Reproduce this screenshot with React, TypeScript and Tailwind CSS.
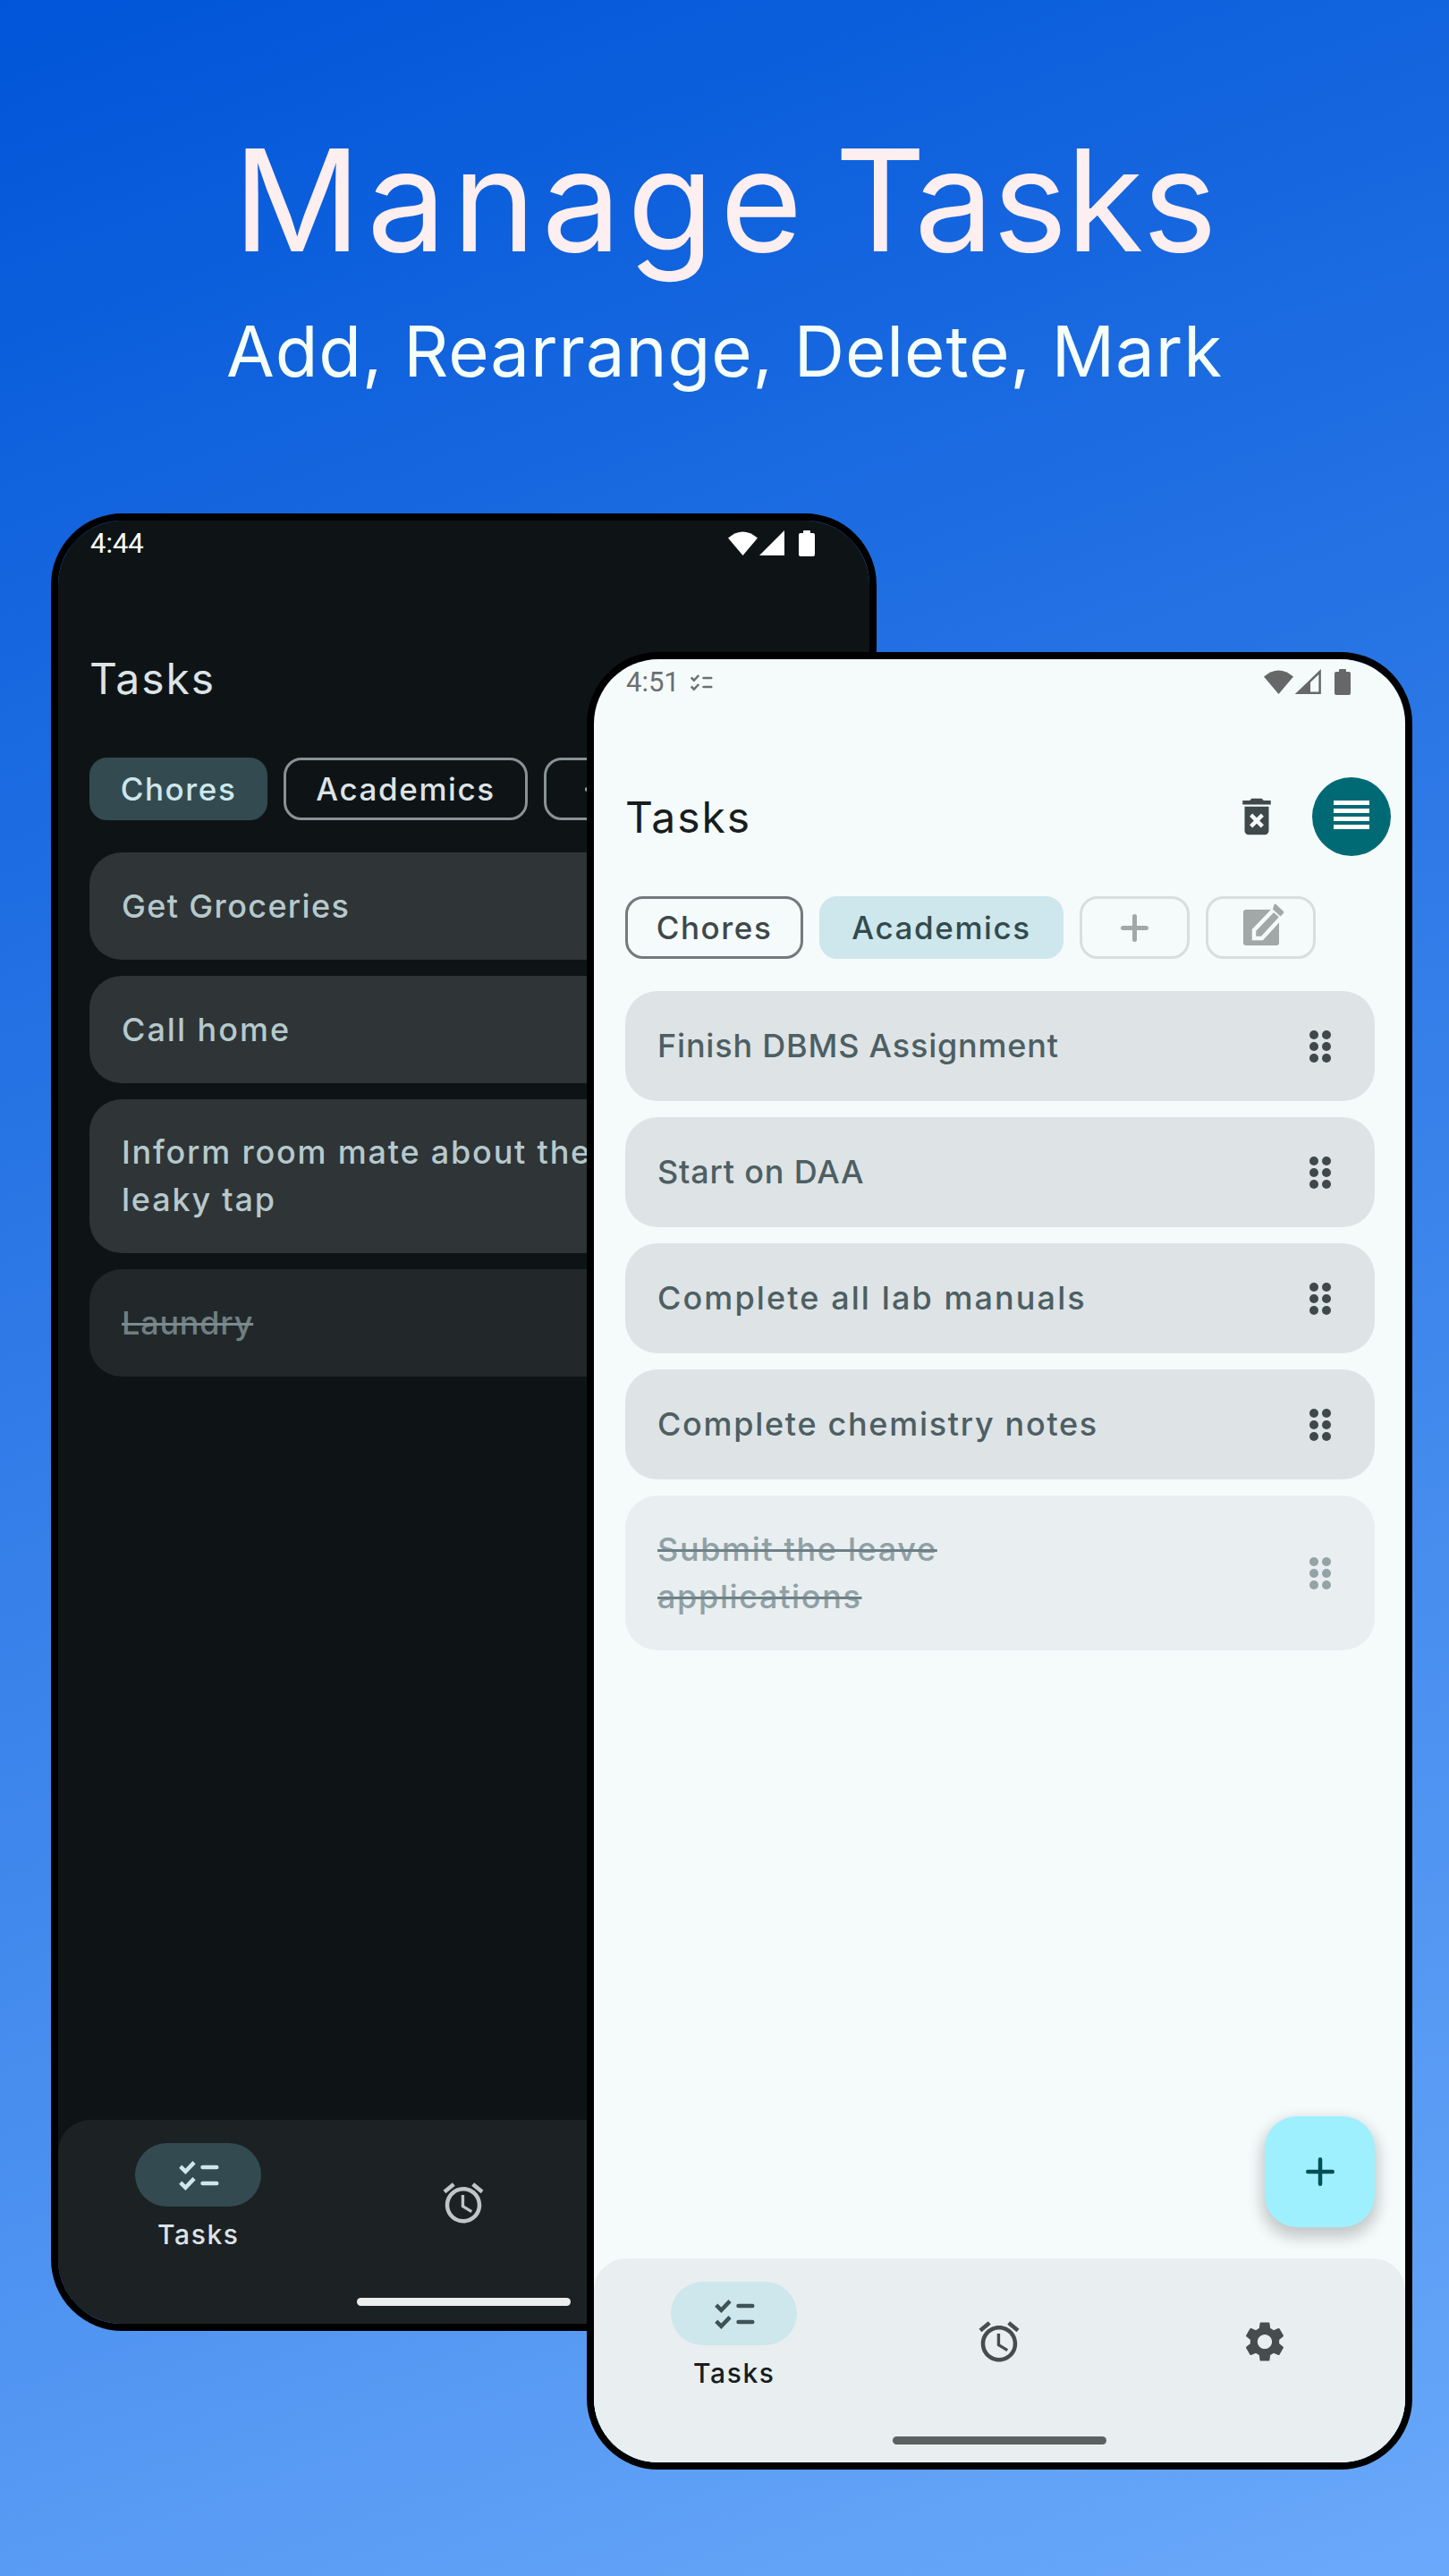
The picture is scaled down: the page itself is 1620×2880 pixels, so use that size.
import React from "react";

const FONT = "font-['Inter','Noto_Sans',sans-serif]";
const ROBOTO = "font-['Roboto','Liberation_Sans',sans-serif]";

type Theme = {
  screen: string; title: string; status: string; statusHex: string;
  chipOn: string; chipOff: string; chipMuted: string; mutedHex: string;
  card: string; cardDone: string; cardText: string; cardDoneText: string; gripHex: string; gripDoneHex: string;
  nav: string; pill: string; pillIconHex: string; navIconHex: string; navLabel: string; bar: string; trashHex: string;
  cardH: string; cardTallH: string;
};

const light: Theme = {
  screen: "bg-[#f5fbfb]", title: "text-[#171d1e]", status: "text-[#6c6f70]", statusHex: "#666868",
  chipOn: "bg-[#cde7ec] text-[#334a4e] border-[3px] border-[#cde7ec]",
  chipOff: "border-[3px] border-[#727a7c] text-[#3f484a]",
  chipMuted: "border-[3px] border-[#d9dddd]", mutedHex: "#a2a7a7",
  card: "bg-[#dee3e5]", cardDone: "bg-[#e9eef0]", cardText: "text-[#4d5f63]", cardDoneText: "text-[#8fa1a5] line-through decoration-[#6d8086]",
  gripHex: "#3f484a", gripDoneHex: "#94a3a6",
  nav: "bg-[#e9eef0]", pill: "bg-[#cde7ec]", pillIconHex: "#3f5256", navIconHex: "#454d4f", navLabel: "text-[#171d1e]", bar: "bg-[#5c6060]", trashHex: "#3f484a",
  cardH: "h-[123px]", cardTallH: "h-[173px]",
};

const dark: Theme = {
  screen: "bg-[#0e1416]", title: "text-[#dde3e6]", status: "text-white", statusHex: "#ffffff",
  chipOn: "bg-[#334b50] text-[#cde7ec] border-[3px] border-[#334b50]",
  chipOff: "border-[3px] border-[#899294] text-[#dde3e6]",
  chipMuted: "border-[3px] border-[#899294]", mutedHex: "#a2a7a7",
  card: "bg-[#2f3436]", cardDone: "bg-[#22272a]", cardText: "text-[#b5c9cd]", cardDoneText: "text-[#6f7f82] line-through decoration-[#7b8c8f]",
  gripHex: "#bfc8ca", gripDoneHex: "#6f7f82",
  nav: "bg-[#1c2124]", pill: "bg-[#334b50]", pillIconHex: "#cde7ec", navIconHex: "#bfc6c8", navLabel: "text-[#dde3e6]", bar: "bg-[#eceeee]", trashHex: "#bfc8ca",
  cardH: "h-[120px]", cardTallH: "h-[172px]",
};

function Checklist({ size, color }: { size: number; color: string }) {
  return (
    <svg width={size} height={size} viewBox="0 0 24 24" fill="none" stroke={color} strokeWidth="2" strokeLinecap="round" strokeLinejoin="miter">
      <path d="M3 7.6 5.5 10.1 9.8 5.6" strokeLinecap="butt" />
      <path d="M3 15.6 5.5 18.1 9.8 13.6" strokeLinecap="butt" />
      <path d="M14 8h7M14 16h7" />
    </svg>
  );
}

function Alarm({ color }: { color: string }) {
  return (
    <svg width={54} height={54} viewBox="0 0 24 24" fill={color}>
      <path d="M22 5.72l-4.6-3.86-1.29 1.53 4.6 3.86L22 5.72zM7.88 3.39L6.6 1.86 2 5.71l1.29 1.53 4.59-3.85zM12.5 8H11v6l4.75 2.85.75-1.23-4-2.37V8zM12 4c-4.97 0-9 4.03-9 9s4.03 9 9 9 9-4.03 9-9-4.03-9-9-9zm0 16c-3.87 0-7-3.13-7-7s3.13-7 7-7 7 3.13 7 7-3.13 7-7 7z" />
    </svg>
  );
}

function Gear({ color }: { color: string }) {
  return (
    <svg width={54} height={54} viewBox="0 0 24 24" fill={color}>
      <path d="M19.14 12.94c.04-.3.06-.61.06-.94 0-.32-.02-.64-.07-.94l2.03-1.58c.18-.14.23-.41.12-.61l-1.92-3.32c-.12-.22-.37-.29-.59-.22l-2.39.96c-.5-.38-1.03-.7-1.62-.94l-.36-2.54c-.04-.24-.24-.41-.48-.41h-3.84c-.24 0-.43.17-.47.41l-.36 2.54c-.59.24-1.13.57-1.62.94l-2.39-.96c-.22-.08-.47 0-.59.22L2.74 8.87c-.12.21-.08.47.12.61l2.03 1.58c-.05.3-.09.63-.09.94s.02.64.07.94l-2.03 1.58c-.18.14-.23.41-.12.61l1.92 3.32c.12.22.37.29.59.22l2.39-.96c.5.38 1.03.7 1.62.94l.36 2.54c.05.24.24.41.48.41h3.84c.24 0 .44-.17.47-.41l.36-2.54c.59-.24 1.13-.56 1.62-.94l2.39.96c.22.08.47 0 .59-.22l1.92-3.32c.12-.22.07-.47-.12-.61l-2.01-1.58zM12 15.6c-1.98 0-3.6-1.62-3.6-3.6s1.62-3.6 3.6-3.6 3.6 1.62 3.6 3.6-1.62 3.6-3.6 3.6z" />
    </svg>
  );
}

function Trash({ color }: { color: string }) {
  return (
    <svg width={54} height={54} viewBox="0 0 24 24" fill={color}>
      <path d="M6 19c0 1.1.9 2 2 2h8c1.1 0 2-.9 2-2V7H6v12zm2.46-7.12 1.41-1.41L12 12.59l2.12-2.12 1.41 1.41L13.41 14l2.12 2.12-1.41 1.41L12 15.41l-2.12 2.12-1.41-1.41L10.59 14l-2.13-2.12zM15.5 4l-1-1h-5l-1 1H5v2h14V4z" />
    </svg>
  );
}

function Reorder() {
  return (
    <svg width={54} height={54} viewBox="0 0 54 54" fill="#ffffff">
      <rect x="7" y="9" width="40" height="5" />
      <rect x="7" y="18" width="40" height="5" />
      <rect x="7" y="27" width="40" height="5" />
      <rect x="7" y="36" width="40" height="5" />
    </svg>
  );
}

function Plus({ color, size = 31, w = 5 }: { color: string; size?: number; w?: number }) {
  return (
    <svg width={size} height={size} viewBox={`0 0 ${size} ${size}`} fill="none" stroke={color} strokeWidth={w} strokeLinecap="round">
      <path d={`M${w / 2} ${size / 2}H${size - w / 2}M${size / 2} ${w / 2}V${size - w / 2}`} />
    </svg>
  );
}

function EditSquare({ color, bg }: { color: string; bg: string }) {
  return (
    <svg width={54} height={54} viewBox="0 0 54 54">
      <rect x="7" y="7" width="40" height="40" rx="3" fill={color} />
      <path d="M19 39 V30 L41 7 L50 15 L28 39 Z" fill={color} stroke={bg} strokeWidth="4.5" strokeLinejoin="miter" />
      <path d="M43.5 1 L51.5 8.5 Q53 10 51.5 11.5 L48.5 14.5 L40 6.5 L41.5 1.5 Q42.5 0 43.5 1 Z" fill={color} />
    </svg>
  );
}

function Grip({ color }: { color: string }) {
  return (
    <svg width={26} height={38} viewBox="0 0 26 38" fill={color}>
      {[6, 19, 32].map((cy) => (
        <g key={cy}>
          <circle cx="6" cy={cy} r="5" />
          <circle cx="20" cy={cy} r="5" />
        </g>
      ))}
    </svg>
  );
}

function StatusIcons({ color, isDark }: { color: string; isDark: boolean }) {
  return (
    <div className="flex items-center">
      <svg width={33} height={28} viewBox="0 0 33 28" fill={color}>
        <path d="M0 8.5 Q16.5 -5.5 33 8.5 L16.5 28 Z" />
      </svg>
      <svg width={29} height={28} viewBox="0 0 29 28" fill={isDark ? color : "none"} stroke={isDark ? "none" : color} strokeWidth={isDark ? 0 : 2.5} className="ml-[2px]">
        {isDark ? <path d="M0 28 L28 0 V28 Z" /> : <path d="M3 26.7 L27.6 3 V26.7 Z" />}
        {!isDark && <path d="M4 26 L17 14 V26 Z" fill={color} stroke="none" />}
      </svg>
      <svg width={18} height={29} viewBox="0 0 18 29" fill={color} className="ml-[15px]">
        <rect x="0" y="3" width="18" height="26" rx="2" />
        <rect x="5" y="0" width="8" height="4" rx="1" />
      </svg>
    </div>
  );
}

function Chip({ children, cls, w }: { children: React.ReactNode; cls: string; w: string }) {
  return (
    <div className={`flex h-[70px] items-center justify-center rounded-[20px] text-[35px] font-medium tracking-[1.6px] ${cls} ${w}`}>
      {children}
    </div>
  );
}

function TaskCard({ t, done, tall, track = "tracking-[0.8px]", children }: { t: Theme; done?: boolean; tall?: boolean; track?: string; children: React.ReactNode }) {
  return (
    <div className={`flex items-center justify-between rounded-[36px] pl-[36px] pr-[48px] text-[36px] leading-[53px] font-medium ${track} ${tall ? t.cardTallH : t.cardH} ${done ? t.cardDone : t.card}`}>
      <div className={`whitespace-nowrap ${done ? t.cardDoneText : t.cardText}`}>{children}</div>
      <Grip color={done ? t.gripDoneHex : t.gripHex} />
    </div>
  );
}

function NavBar({ t }: { t: Theme }) {
  return (
    <div className={`flex h-[228px] flex-col rounded-t-[36px] ${t.nav}`}>
      <div className="grid h-[199px] grid-cols-3 px-[8.5px]">
        <div className="flex flex-col items-center pt-[26px]">
          <div className={`flex h-[71px] w-[141px] items-center justify-center rounded-full ${t.pill}`}>
            <Checklist size={54} color={t.pillIconHex} />
          </div>
          <div className={`mt-[13px] text-[30px] leading-[36px] font-medium tracking-[1.6px] ${t.navLabel}`}>Tasks</div>
        </div>
        <div className="flex flex-col items-center pt-[66px]">
          <Alarm color={t.navIconHex} />
        </div>
        <div className="flex flex-col items-center pt-[66px]">
          <Gear color={t.navIconHex} />
        </div>
      </div>
      <div className={`mx-auto h-[9px] w-[239px] rounded-full ${t.bar}`} />
    </div>
  );
}

function Phone({ t, isDark, time, cards, className }: { t: Theme; isDark: boolean; time: React.ReactNode; cards: React.ReactNode; className: string }) {
  return (
    <div className={`col-start-1 row-start-1 h-[2032px] w-[923px] rounded-[80px] border-[8px] border-black ${className}`}>
      <div className={`flex h-full flex-col overflow-hidden rounded-[72px] ${t.screen}`}>
        <div className="flex h-[50px] items-center justify-between pl-[36px] pr-[61px]">
          <div className={`mt-[2px] flex items-center text-[31px] leading-[50px] ${ROBOTO} ${t.status}`}>{time}</div>
          <StatusIcons color={t.statusHex} isDark={isDark} />
        </div>
        <div className="flex h-[215px] items-center pl-[35px] pr-[16px] pt-[47px] pb-[10px]">
          <div className={`mt-[2px] flex-1 text-[48px] leading-[60px] tracking-[1.9px] ${t.title}`}>Tasks</div>
          {!isDark && (
            <>
              <div className="mr-[35px] flex h-[88px] w-[54px] items-center justify-center">
                <Trash color={t.trashHex} />
              </div>
              <div className="flex h-[88px] w-[88px] items-center justify-center rounded-full bg-[#006a74]">
                <Reorder />
              </div>
            </>
          )}
        </div>
        <div className="flex gap-[18px] pl-[35px]">
          <Chip cls={isDark ? t.chipOn : t.chipOff} w="w-[199px]">Chores</Chip>
          <Chip cls={isDark ? t.chipOff : t.chipOn} w="w-[273px]">Academics</Chip>
          <Chip cls={t.chipMuted} w="w-[123px]"><Plus color={t.mutedHex} /></Chip>
          <Chip cls={t.chipMuted} w="w-[123px]"><EditSquare color={t.mutedHex} bg={isDark ? "#0e1416" : "#f5fbfb"} /></Chip>
        </div>
        <div className="mt-[36px] flex flex-col gap-[18px] pl-[35px] pr-[34px]">{cards}</div>
        {isDark ? (
          <div className="flex-1" />
        ) : (
          <div className="flex flex-1 items-end justify-end pr-[34px] pb-[35px]">
            <div className="flex h-[124px] w-[123px] items-center justify-center rounded-[36px] bg-[#9ef0ff] shadow-[0_8px_16px_4px_rgba(0,0,0,0.2)]">
              <Plus color="#004f58" size={32} w={4.5} />
            </div>
          </div>
        )}
        <NavBar t={t} />
      </div>
    </div>
  );
}

export default function App() {
  return (
    <div className={`flex h-[2880px] w-[1620px] flex-col overflow-hidden bg-[linear-gradient(160deg,#0055d8_0%,#6aa9fa_100%)] ${FONT}`}>
      <h1 className="mt-[136px] text-center text-[158px] leading-[176px] font-normal text-[#fdeef0]">
        <span className="tracking-[6.8px] [word-spacing:-22px]">Manage </span>
        <span className="tracking-[-1.3px]">Tasks</span>
      </h1>
      <p className="mt-[31px] text-center text-[78px] leading-[100px] font-normal tracking-[0.9px] text-[#f5fff8]">Add, Rearrange, Delete, Mark</p>
      <div className="mt-[131px] grid grid-cols-[1fr] pl-[57px]">
        <Phone
          t={dark}
          isDark
          className=""
          time={<span>4:44</span>}
          cards={
            <>
              <TaskCard t={dark} track="tracking-[1.35px]">Get Groceries</TaskCard>
              <TaskCard t={dark} track="tracking-[2px]">Call home</TaskCard>
              <TaskCard t={dark} tall track="tracking-[1.8px]">Inform room mate about the<br />leaky tap</TaskCard>
              <TaskCard t={dark} done>Laundry</TaskCard>
            </>
          }
        />
        <Phone
          t={light}
          isDark={false}
          className="ml-[599px] mt-[155px]"
          time={
            <>
              <span>4:51</span>
              <span className="ml-[9px]"><Checklist size={30} color="#6c6f70" /></span>
            </>
          }
          cards={
            <>
              <TaskCard t={light}>Finish DBMS Assignment</TaskCard>
              <TaskCard t={light}>Start on DAA</TaskCard>
              <TaskCard t={light} track="tracking-[2.1px]">Complete all lab manuals</TaskCard>
              <TaskCard t={light} track="tracking-[1.7px]">Complete chemistry notes</TaskCard>
              <TaskCard t={light} done tall track="tracking-[1.65px]">Submit the leave<br />applications</TaskCard>
            </>
          }
        />
      </div>
    </div>
  );
}
